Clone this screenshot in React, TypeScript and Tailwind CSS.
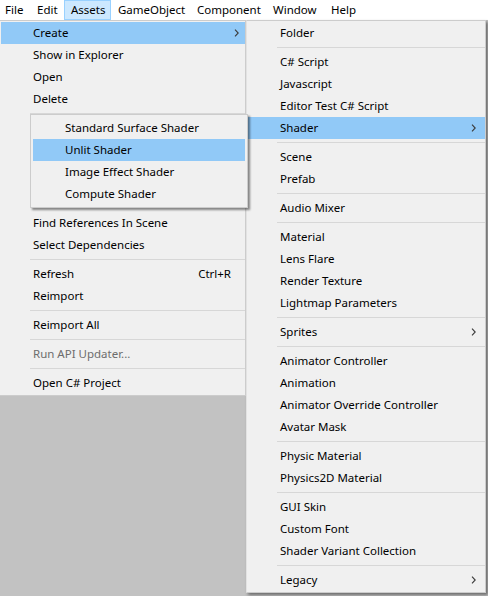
import React from 'react';

type Item =
  | { label: string; arrow?: boolean; shortcut?: string; disabled?: boolean; active?: boolean }
  | 'sep';

// rows hidden behind the Shader submenu are left blank
const ASSETS_MENU: Item[] = [
  { label: 'Create', arrow: true, active: true },
  { label: 'Show in Explorer' },
  { label: 'Open' },
  { label: 'Delete' },
  'sep',
  { label: '' },
  'sep',
  { label: '' },
  { label: '' },
  { label: '' },
  { label: 'Find References In Scene' },
  { label: 'Select Dependencies' },
  'sep',
  { label: 'Refresh', shortcut: 'Ctrl+R' },
  { label: 'Reimport' },
  'sep',
  { label: 'Reimport All' },
  'sep',
  { label: 'Run API Updater...', disabled: true },
  'sep',
  { label: 'Open C# Project' },
];

const CREATE_MENU: Item[] = [
  { label: 'Folder' },
  'sep',
  { label: 'C# Script' },
  { label: 'Javascript' },
  { label: 'Editor Test C# Script' },
  { label: 'Shader', arrow: true, active: true },
  'sep',
  { label: 'Scene' },
  { label: 'Prefab' },
  'sep',
  { label: 'Audio Mixer' },
  'sep',
  { label: 'Material' },
  { label: 'Lens Flare' },
  { label: 'Render Texture' },
  { label: 'Lightmap Parameters' },
  'sep',
  { label: 'Sprites', arrow: true },
  'sep',
  { label: 'Animator Controller' },
  { label: 'Animation' },
  { label: 'Animator Override Controller' },
  { label: 'Avatar Mask' },
  'sep',
  { label: 'Physic Material' },
  { label: 'Physics2D Material' },
  'sep',
  { label: 'GUI Skin' },
  { label: 'Custom Font' },
  { label: 'Shader Variant Collection' },
  'sep',
  { label: 'Legacy', arrow: true },
];

const SHADER_MENU: Item[] = [
  { label: 'Standard Surface Shader' },
  { label: 'Unlit Shader', active: true },
  { label: 'Image Effect Shader' },
  { label: 'Compute Shader' },
];

function Chevron() {
  return (
    <svg width="5" height="8" viewBox="0 0 5 8" className="shrink-0">
      <path d="M1 0.6 L4.2 4 L1 7.4" fill="none" stroke="#3a3a3a" strokeWidth="1.1" />
    </svg>
  );
}

function MenuRows({ items, arrowPad }: { items: Item[]; arrowPad: string }) {
  return (
    <>
      {items.map((item, i) =>
        item === 'sep' ? (
          <div key={i} className="h-[7px] flex items-center pl-[29px]">
            <div className="h-px flex-1 bg-[#d7d7d7]" />
          </div>
        ) : (
          <div
            key={i}
            className={`h-[22px] flex items-center pl-[32px] ${arrowPad} ${
              item.active ? 'bg-[#91c9f7]' : ''
            } ${item.disabled ? 'text-[#6d6d6d]' : 'text-black'}`}
          >
            <span className="flex-1 whitespace-nowrap">{item.label}</span>
            {item.shortcut && <span className="pr-[8px]">{item.shortcut}</span>}
            {item.arrow && <Chevron />}
          </div>
        )
      )}
    </>
  );
}

export default function App() {
  return (
    <div className="w-[488px] h-[596px] overflow-hidden bg-[#c2c2c2] flex flex-col font-['Noto_Sans',sans-serif] text-[11.5px] leading-none">
      {/* Menu bar */}
      <div className="h-[20px] bg-white flex items-stretch text-black shrink-0">
        <div className="w-[31px] pl-[5px] flex items-center">File</div>
        <div className="w-[33px] pl-[6px] flex items-center">Edit</div>
        <div className="w-[47px] pl-[6px] flex items-center bg-[#cce8ff] border border-[#99d1ff]">Assets</div>
        <div className="w-[80px] pl-[7px] flex items-center">GameObject</div>
        <div className="w-[76px] pl-[6px] flex items-center">Component</div>
        <div className="w-[58px] pl-[6px] flex items-center">Window</div>
        <div className="pl-[6px] flex items-center">Help</div>
      </div>

      <div className="flex flex-1 items-start">
        {/* Assets menu */}
        <div className="w-[246px] shrink-0 flex flex-col">
          <div className="relative bg-[#f0f0f0] border-t border-r border-b border-[#cccccc] pl-[1px] pt-[1px] pb-[1px]">
            <MenuRows items={ASSETS_MENU} arrowPad="pr-[6px]" />

            {/* Shader submenu */}
            <div className="absolute left-[30px] top-[93px] w-[218px] h-[94px] bg-[#f0f0f0] border border-[#cccccc] p-[2px] shadow-[2px_2px_2px_rgba(0,0,0,0.45)]">
              <MenuRows items={SHADER_MENU} arrowPad="pr-[6px]" />
            </div>
          </div>
        </div>

        {/* Create submenu */}
        <div className="w-[240px] shrink-0 bg-[#f0f0f0] border border-[#cccccc] border-l-[#e2e2e2] pl-[1px] pt-[1px] pb-[1px] shadow-[2px_2px_3px_rgba(0,0,0,0.45)]">
          <MenuRows items={CREATE_MENU} arrowPad="pr-[9px]" />
        </div>
      </div>
    </div>
  );
}
